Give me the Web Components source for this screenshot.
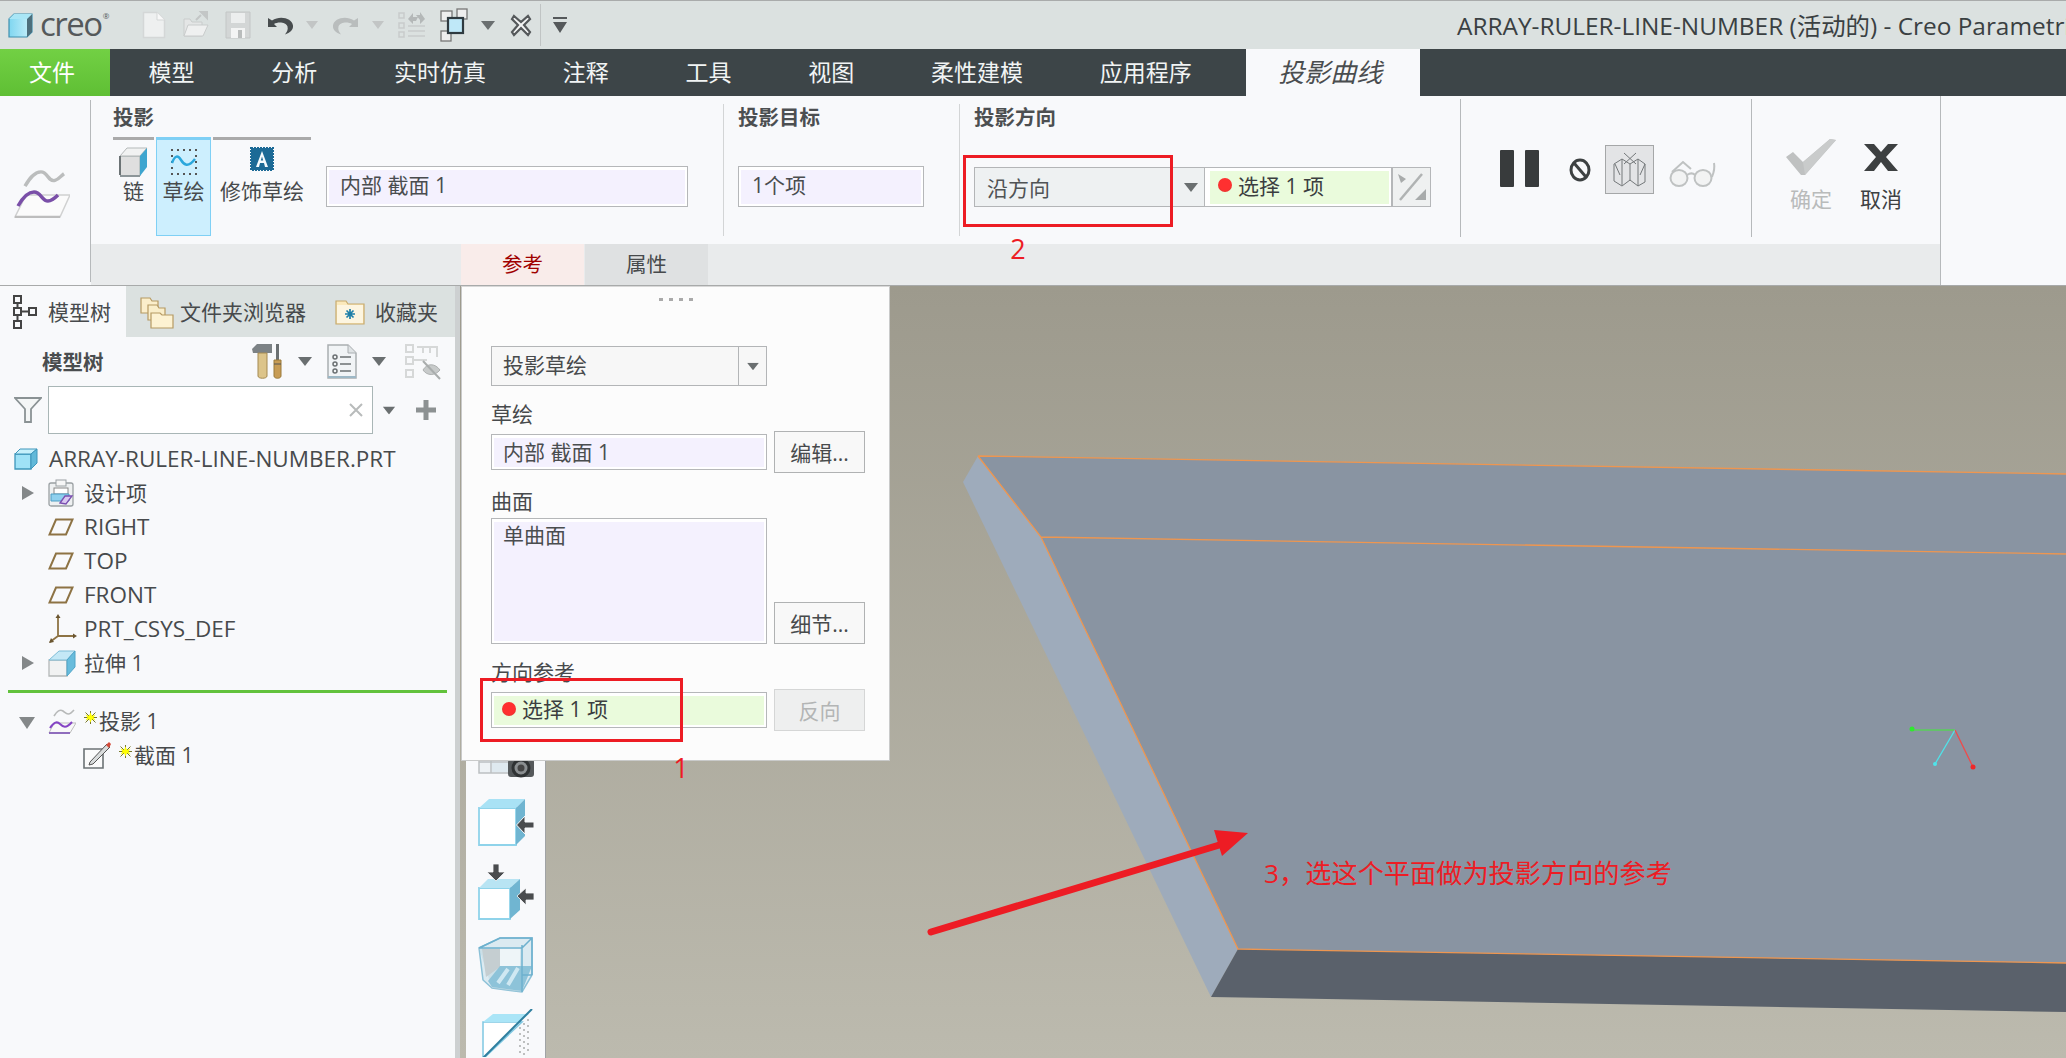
<!DOCTYPE html>
<html lang="zh">
<head>
<meta charset="utf-8">
<title>Creo Parametric</title>
<style>
  html, body { margin: 0; height: 100%; overflow: hidden; background: #f8f9fb; }
  body { font-family: "Open Sans", "Noto Sans CJK SC", sans-serif; font-size: 21px; color: #474a4c; }
</style>
</head>
<body>
<creo-app></creo-app>
<script>
const FONT = `"Open Sans", "Noto Sans CJK SC", sans-serif`;

// [width, height, svg body], drawn at 1:1 pixels
const icons = {
  logo: [25, 25, `<defs><linearGradient id="a" x1="0" x2="1"><stop offset="0" stop-color="#7fd6f0"/><stop offset="1" stop-color="#c9f1fb"/></linearGradient></defs>
    <path d="M1 6 6 1H24V19L19 24H1Z" fill="url(#a)" stroke="#3f8fae" stroke-width="1.2"/><path d="M19 5.500 24 1V19L19 24Z" fill="#4d6f7c"/><path d="M1 6 6 1H24L19 6Z" fill="#a9e6f6"/>`],
  newdoc: [24, 28, `<path d="M1.500 1.500H15L22.500 9V26.500H1.500Z" fill="#eef0f0" stroke="#d4d7d7" stroke-width="1.500"/><path d="M15 1.500V9H22.500" fill="#f8f8f8" stroke="#d4d7d7"/>`],
  open: [28, 28, `<path d="M3 25V8H9L11 11H21V25Z" fill="#e4e6e6" stroke="#c9cccc"/><path d="M3 25 7 14H27L22 25Z" fill="#eff0f0" stroke="#c9cccc"/><path d="M15 9 20 4M20 1 26 1 26 7Z" fill="#c3c6c6" stroke="#c3c6c6" stroke-width="2"/>`],
  save: [26, 28, `<path d="M1 1H25V27H1Z" fill="#d3d6d6" stroke="#c3c6c6"/><path d="M6 2H20V12H6Z" fill="#eceeee"/><path d="M6 17H20V27H6Z" fill="#f3f4f4"/><path d="M13 19H17V27H13Z" fill="#b9bcbc"/>`],
  undo: [28, 20, `<path d="M2 3V12H11L8 9C12 6.500 20 7 21.500 11.500 22.300 14.500 21 17 19 19.500 24 18 27.500 14.500 27 10.500 26 3.500 14.500 0 6 5.500Z" fill="#474c4e"/>`],
  redo: [28, 20, `<path d="M26 3V12H17L20 9C16 6.500 8 7 6.500 11.500 5.700 14.500 7 17 9 19.500 4 18 .5 14.500 1 10.500 2 3.500 13.500 0 22 5.500Z" fill="#b9bdbd"/>`],
  regen: [28, 28, `<g fill="none" stroke="#c9cbcb" stroke-width="1.500"><rect x="1" y="2" width="5" height="5"/><rect x="1" y="12" width="5" height="5"/><rect x="1" y="21" width="5" height="5"/><path d="M10 15H27M10 20H27M10 25H27"/></g><path d="M10 8 15 2 15 6 20 6 18 10 15 10V13ZM27 8 22 13V9L18 4 22 4V1Z" fill="#b4b8b8"/>`],
  windows: [28, 34, `<g fill="#eee" stroke="#777" stroke-width="1.300"><rect x="1" y="3" width="11" height="10"/><rect x="17" y="1" width="10" height="10"/><rect x="1" y="23" width="10" height="10"/></g><rect x="8" y="10" width="15" height="15" fill="#bfe8f8" stroke="#2f3a40" stroke-width="2.200"/>`],
  closex: [22, 24, `<path d="M4 3 11 9 18 3 20 6 14 12 20 19 18 22 11 15 4 22 2 19 8 12 2 6Z" fill="#f4f5f5" stroke="#55595b" stroke-width="2.200"/>`],
  drop: [14, 9, `<path d="M0 0H14L7 9Z" fill="#6a6f70"/>`],
  dropPale: [12, 8, `<path d="M0 0H12L6 8Z" fill="#c2c5c5"/>`],
  qat: [16, 18, `<path d="M1 1H15V3H1ZM1 6H15L8 17Z" fill="#55595b"/>`],

  project: [56, 50, `<path d="M11 18C15 11 20 3 27 3 34 3 34 14 41 12 45 11 47 7 50 5" transform="translate(0 1) scale(1 .95)" fill="none" stroke="#bbbdbd" stroke-width="3.500"/>
    <path d="M12 27H56L46 49H1Z" fill="#fbfbfb" stroke="#d0d1d1" stroke-width="1.500"/><path d="M1 49H46" stroke="#bdbdbd" stroke-width="2.500"/>
    <path d="M4 38C8 31 13 24 20 24 27 24 28 33 34 33 38 33 41 30 44 27" fill="none" stroke="#7a4fa8" stroke-width="3.500"/>`],
  chain: [30, 30, `<path d="M1 9H21V29H3L1 27Z" fill="#dfdfdf" stroke="#9aa" stroke-width="1"/><path d="M1 9 8 1H28L21 9Z" fill="#f1f2f2" stroke="#b5b9b9"/><path d="M21 9 28 1V20L21 29Z" fill="#3ea5cf"/><path d="M1 9V28" stroke="#6c7375" stroke-width="2"/><path d="M1 29H21" stroke="#8d9699" stroke-width="2"/>`],
  sketch: [28, 28, `<g fill="#555"><rect x="1" y="2" width="2" height="2"/><rect x="7" y="2" width="2" height="2"/><rect x="13" y="2" width="2" height="2"/><rect x="19" y="2" width="2" height="2"/><rect x="25" y="2" width="2" height="2"/><rect x="1" y="8" width="2" height="2"/><rect x="25" y="8" width="2" height="2"/><rect x="1" y="14" width="2" height="2"/><rect x="25" y="14" width="2" height="2"/><rect x="1" y="20" width="2" height="2"/><rect x="25" y="20" width="2" height="2"/><rect x="1" y="26" width="2" height="2"/><rect x="7" y="26" width="2" height="2"/><rect x="13" y="26" width="2" height="2"/><rect x="19" y="26" width="2" height="2"/><rect x="25" y="26" width="2" height="2"/></g><path d="M2 16C5 8 8 8 11 13S18 21 25 12" fill="none" stroke="#2ba7dc" stroke-width="2.500"/>`],
  cosmetic: [24, 24, `<rect x="1" y="1" width="22" height="22" fill="#1c6a96" stroke="#1c6a96" stroke-dasharray="2 1" stroke-width="2"/><path d="M12 4 18 20H15L14 16H10L9 20H6ZM10.800 13.500H13.200L12 9.500Z" fill="#f5fbfe"/>`],
  flip: [30, 30, `<rect x="0" y="0" width="30" height="30" fill="#eff1f1"/><path d="M25 2 3 28" stroke="#b0b3b3" stroke-width="2.500"/><path d="M1 2 9 7 4 11ZM29 28H18L29 17Z" fill="#a8abab"/>`],
  pause: [41, 39, `<rect x="1" y="1" width="14" height="37" rx="1" fill="#383b3c"/><rect x="26" y="1" width="14" height="37" rx="1" fill="#383b3c"/>`],
  noentry: [22, 24, `<ellipse cx="11" cy="12" rx="9" ry="10" fill="none" stroke="#3d4142" stroke-width="3"/><path d="M5 5 17 19" stroke="#3d4142" stroke-width="3"/>`],
  wire: [36, 38, `<g fill="none" stroke="#74787a" stroke-width="1"><path d="M2 13 10 8 18 13 26 8 33 13V31L26 35 18 29 10 35 2 30Z"/><path d="M10 8V34M18 13V30M26 8V35"/><path d="M12 2 24 13M24 2 12 13M3 13 8 24M33 13 28 24"/></g>`],
  glasses: [48, 28, `<g fill="#f2f3f3" stroke="#bfc2c2" stroke-width="2"><ellipse cx="10" cy="18" rx="8.500" ry="8"/><ellipse cx="34" cy="18" rx="8.500" ry="8"/></g><path d="M18 15C21 13 24 13 26 15M3 12 14 2 22 9M43 17C45 12 46 8 45 3" fill="none" stroke="#bfc2c2" stroke-width="2"/>`],
  check: [52, 38, `<path d="M1 19 8 14 18 24 45 1 51 2 20 37H16Z" fill="#bfc1c1"/><path d="M18 24 45 1 51 2 20 37Z" fill="#c9cbcb"/>`],
  cross: [36, 29, `<path d="M1 1H11L18 9 25 1H35L23 14 35 28H25L18 19 11 28H1L13 14Z" fill="#3d4041"/>`],

  treeTab: [24, 34, `<g fill="none" stroke="#444" stroke-width="2"><rect x="1" y="1" width="7" height="7"/><rect x="1" y="13" width="7" height="7"/><rect x="16" y="13" width="7" height="7"/><rect x="1" y="26" width="7" height="7"/><path d="M4.500 8V13M4.500 20V26M8 16.500H16"/></g>`],
  folders: [34, 34, `<g stroke="#b69a63" stroke-width="1.200"><path d="M1 3H10L12 6H18V18H1Z" fill="#fbeecb"/><path d="M8 10H17L19 13H25V25H8Z" fill="#faeeca"/><path d="M11 18H20L22 20H33V33H11Z" fill="#fdf2d2"/></g>`],
  favorite: [30, 27, `<path d="M1 3H11L13 6H29V26H1Z" fill="#fbe9bb" stroke="#c7aa6d" stroke-width="1.200"/><rect x="2" y="7" width="26" height="18" fill="#fdf5e0"/><g stroke="#1f7fa8" stroke-width="1.700"><path d="M15 11V21M10 16H20M11.500 12.500 18.500 19.500M18.500 12.500 11.500 19.500"/></g>`],
  tools: [30, 35, `<path d="M0 5 5 0H20V9H1Z" fill="#7c8285"/><path d="M6 9H15V32C15 35 6 35 6 32Z" fill="#dcc48a" stroke="#a48950"/><path d="M24 0H27V16H24Z" fill="#6b7072"/><path d="M22 16H29V32C29 35 22 35 22 32Z" fill="#c79c55" stroke="#9a7a3a"/><path d="M22 20H29" stroke="#555"/>`],
  listDoc: [30, 35, `<path d="M1 1H21L29 9V34H1Z" fill="#f1f4f6" stroke="#a9aeb1" stroke-width="1.500"/><path d="M21 1V9H29" fill="#dfe3e5" stroke="#a9aeb1"/><g stroke="#6b7073" stroke-width="1.500" fill="none"><circle cx="8" cy="13" r="2"/><circle cx="8" cy="20" r="2"/><circle cx="8" cy="27" r="2"/><path d="M13 13H24M13 20H24M13 27H24"/></g><path d="M1 33H29" stroke="#9db8c6" stroke-width="2"/>`],
  hideTree: [36, 36, `<g fill="none" stroke="#d6d8d8" stroke-width="2"><rect x="1" y="1" width="7" height="7"/><rect x="1" y="13" width="7" height="7"/><rect x="1" y="26" width="7" height="7"/><path d="M12 3H32V8M12 16H22"/><path d="M18 3V9M25 3V9M32 3V13M8 16H12"/></g><path d="M18 26C22 19 30 19 35 26 30 32 22 32 18 26Z" fill="#c7caca" stroke="#aeb1b1"/><path d="M18 17 35 35" stroke="#a9adad" stroke-width="2"/>`],
  funnel: [28, 26, `<path d="M1 1H27L17 12V25H11V12Z" fill="#f4f6f6" stroke="#8a9294" stroke-width="1.800"/>`],
  clear: [14, 14, `<path d="M1 1 13 13M13 1 1 13" stroke="#b8bbbb" stroke-width="2"/>`],
  plus: [20, 20, `<path d="M7.500 0H12.500V7.500H20V12.500H12.500V20H7.500V12.500H0V7.500H7.500Z" fill="#8c9192"/>`],

  part: [24, 22, `<path d="M1 6H17V21H1Z" fill="#9fe2f7" stroke="#3e96bb" stroke-width="1.300"/><path d="M1 6 6 1H23L17 6Z" fill="#c6f0fb" stroke="#3e96bb" stroke-width="1"/><path d="M17 6 23 1V15L17 21Z" fill="#62b9d9" stroke="#3e96bb" stroke-width="1"/>`],
  design: [26, 28, `<rect x="1" y="4" width="24" height="23" rx="2" fill="#eef0f1" stroke="#9aa0a3" stroke-width="1.300"/><rect x="8" y="1" width="10" height="6" fill="#f6f6f6" stroke="#9aa0a3"/><rect x="6" y="9" width="14" height="6" fill="#fff" stroke="#888"/><path d="M3 15H21V22H3Z" fill="#8fd0ee" stroke="#4d9dc4"/><path d="M12 24 17 17H24L18 25Z" fill="#d9c8f0" stroke="#7a4fb0" stroke-width="1.300"/>`],
  plane: [26, 18, `<path d="M8 1.500H24.500L18 16.500H1.500Z" fill="none" stroke="#8d7344" stroke-width="2"/>`],
  csys: [29, 30, `<path d="M10 2V22M10 22H27M10 22 2 28" fill="none" stroke="#8d7344" stroke-width="1.800"/><path d="M10 0 12.500 4H7.500ZM29 22 25 19.500V24.500ZM1 29 3 24 6 28Z" fill="#6a5530"/>`],
  extrude: [28, 28, `<path d="M1 11H19V27H1Z" fill="#f1f2f2" stroke="#b4b8b8" stroke-width="1.300"/><path d="M1 11 11 2H27L19 11Z" fill="#c4e8f6" stroke="#7fbdd7"/><path d="M19 11 27 2V18L19 27Z" fill="#68bcdc" stroke="#4fa5c8"/>`],
  projSmall: [28, 26, `<path d="M6 8C9 3 12 1 15 3S20 9 26 2" fill="none" stroke="#b7b9b9" stroke-width="1.600"/><path d="M6 15H28L22 25H1Z" fill="#f8f8f8" stroke="#bdbdbd"/><path d="M1 25H22" stroke="#8f6dbd" stroke-width="2"/><path d="M2 20C6 14 9 13 12 16S18 21 24 14" fill="none" stroke="#8444c4" stroke-width="2"/>`],
  section: [28, 28, `<path d="M1 8H20V27H1Z" fill="#fbfbfb" stroke="#6c7375" stroke-width="1.600"/><path d="M7 21 24 3 27 6 10 23 6 24Z" fill="#d9dcdc" stroke="#555" stroke-width="1"/><path d="M23 4 26 1 28 3 26 7Z" fill="#d34a3a"/>`],
  star: [13, 13, `<g stroke="#77772a" stroke-width="1"><path d="M6.500 0V13M0 6.500H13M1.500 1.500 11.500 11.500M11.500 1.500 1.500 11.500"/></g><path d="M6.500 1.500 8 5 11.500 3.500 9.500 6.500 11.500 9.500 8 8 6.500 11.500 5 8 1.500 9.500 3.500 6.500 1.500 3.500 5 5Z" fill="#ffff00"/>`],

  shotTool: [56, 37, `<g fill="#eef2f5" stroke="#bcc0c2" stroke-width="1.500"><path d="M1 0H31V32H1Z"/><path d="M1 21H31M13 0V32"/></g><path d="M14 22H31V31H14Z" fill="#dfe9ef"/><rect x="30" y="18" width="26" height="18" rx="3" fill="#55595b"/><circle cx="43" cy="27" r="8" fill="#8a8e90" stroke="#2f3233" stroke-width="3"/><circle cx="43" cy="27" r="3.500" fill="#444"/>`],
  cubeArrow: [56, 48, `<path d="M1 10H38V47H1Z" fill="#fff" stroke="#8fd3ea" stroke-width="1.800"/><path d="M1 10 11 1H47L38 10Z" fill="#a9e2f5"/><path d="M38 10 47 1V38L38 47Z" fill="#70b5d1"/><path d="M38.500 27 47 18V24H56V30H47V36Z" fill="#4a4c4e" stroke="#f8f9fb" stroke-width="1"/>`],
  cubeArrows: [56, 56, `<path d="M1 24H32V55H1Z" fill="#fff" stroke="#8fd3ea" stroke-width="1.800"/><path d="M1 24 10 15H42L32 24Z" fill="#b8e4f3"/><path d="M32 24 42 15V46L32 55Z" fill="#70b5d1"/><path d="M18 17 9 8H15V0H21V8H27ZM39 32 48 24V29H56V36H48V41Z" fill="#4a4c4e" stroke="#f8f9fb" stroke-width=".8"/>`],
  shellBox: [55, 56, `<path d="M1 11 22 1H54V38L44 55 14 51 5 43Z" fill="#dbeaf1" stroke="#8cc1d7" stroke-width="1.500"/><path d="M1 11H42L44 55 14 51Z" fill="#bcd6e0" fill-opacity=".5"/><path d="M22 10H42V29H22Z" fill="#eef5f8"/><path d="M4 12 22 12 22 30 8 40Z" fill="#c5ced1"/><path d="M10 44 22 29H54L44 54 14 50Z" fill="#8dc3d9"/><path d="M20 46 30 32M30 48 40 31" stroke="#cfe8f2" stroke-width="4"/><path d="M1 11 22 1H54V38M44 8V55M1 11H44L54 1M44 38H54" fill="none" stroke="#6db1ce" stroke-width="1.500"/>`],
  clipCube: [52, 48, `<path d="M1 13H40L1 50Z" fill="#fff" stroke="#7fc8e2" stroke-width="1.500"/><path d="M1 13 11 5H47L37 13Z" fill="#aae5f7"/><g fill="#bdbfbf"><rect x="37" y="18" width="2" height="2"/><rect x="41" y="14" width="2" height="2"/><rect x="45" y="10" width="2" height="2"/><rect x="41" y="20" width="2" height="2"/><rect x="45" y="16" width="2" height="2"/><rect x="37" y="24" width="2" height="2"/><rect x="41" y="26" width="2" height="2"/><rect x="45" y="22" width="2" height="2"/><rect x="37" y="30" width="2" height="2"/><rect x="41" y="32" width="2" height="2"/><rect x="45" y="28" width="2" height="2"/><rect x="37" y="36" width="2" height="2"/><rect x="41" y="38" width="2" height="2"/><rect x="45" y="34" width="2" height="2"/><rect x="37" y="42" width="2" height="2"/><rect x="41" y="44" width="2" height="2"/><rect x="45" y="40" width="2" height="2"/></g><path d="M50 0 0 50" stroke="#2f7f9f" stroke-width="2"/>`]
};

class CreoIcon extends HTMLElement {
  connectedCallback() {
    if (this.shadowRoot) return;
    const [w, h, body] = icons[this.getAttribute('name')];
    this.attachShadow({ mode: 'open' }).innerHTML = `
      <style>:host{display:block;flex:none;width:${w}px;height:${h}px;line-height:0}</style>
      <svg xmlns="http://www.w3.org/2000/svg" width="${w}" height="${h}" viewBox="0 0 ${w} ${h}">${body}</svg>`;
  }
}

class CreoField extends HTMLElement {
  constructor() {
    super();
    this.attachShadow({ mode: 'open' }).innerHTML = `
      <style>
        :host{display:block;box-sizing:border-box;border:1px solid #b5b7b9;background:#fff;padding:3px 2px 2px 2px;flex:none}
        .in{height:100%;box-sizing:border-box;background:#f4f1fe;display:flex;align-items:flex-start;padding-left:var(--pad,11px);white-space:nowrap;line-height:var(--lh,30px);color:#4a4d4f}
        :host([kind=green]) .in{background:#eafbdc;color:#3b3e40;padding-left:8px}
        .dot{display:none;width:14px;height:14px;border-radius:50%;background:radial-gradient(circle at 50% 45%,#ff3030 55%,#c23c30);margin:calc((var(--lh,30px) - 14px)/2 - 1px) 6px 0 0;flex:none}
        :host([kind=green]) .dot{display:block}
      </style>
      <div class="in"><span class="dot"></span><span><slot></slot></span></div>`;
  }
}

class CreoButton extends HTMLElement {
  constructor() {
    super();
    this.attachShadow({ mode: 'open' }).innerHTML = `
      <style>
        :host{display:flex;align-items:center;justify-content:center;box-sizing:border-box;width:91px;height:42px;flex:none;margin-left:7px;border:1px solid #b0b2b3;background:#f8f8f8;color:#474a4c}
        :host([disabled]){background:#eeefef;border-color:#d5d6d6;color:#b3b5b5}
      </style><slot></slot>`;
  }
}

class CreoTitlebar extends HTMLElement {
  constructor() {
    super();
    this.attachShadow({ mode: 'open' }).innerHTML = `
      <style>
        :host{display:flex;align-items:center;height:49px;box-sizing:border-box;border-top:1px solid #a9abab;background:#dbe1e0;overflow:hidden;white-space:nowrap}
        .logo{font:400 33px/1 "Open Sans",sans-serif;color:#55595b;letter-spacing:-1.500px;margin:-3px 0 0 7px;width:76px;flex:none}
        .logo sup{font-size:8px;vertical-align:17px;margin-left:1px;letter-spacing:0}
        .sep{width:1px;height:42px;background:#c0c4c4;margin-left:8px;flex:none}
        .title{margin-left:889px;font-size:24.400px;color:#3a4042;flex:none;position:relative;top:-1px}
      </style>
      <creo-icon name="logo" style="margin-left:8px"></creo-icon>
      <span class="logo">creo<sup>®</sup></span>
      <creo-icon name="newdoc" style="margin-left:26px"></creo-icon>
      <creo-icon name="open" style="margin-left:15px"></creo-icon>
      <creo-icon name="save" style="margin-left:16px"></creo-icon>
      <creo-icon name="undo" style="margin-left:15px"></creo-icon>
      <creo-icon name="dropPale" style="margin-left:12px"></creo-icon>
      <creo-icon name="redo" style="margin-left:14px"></creo-icon>
      <creo-icon name="dropPale" style="margin-left:12px"></creo-icon>
      <creo-icon name="regen" style="margin-left:14px"></creo-icon>
      <creo-icon name="windows" style="margin-left:14px"></creo-icon>
      <creo-icon name="drop" style="margin-left:13px"></creo-icon>
      <creo-icon name="closex" style="margin-left:15px"></creo-icon>
      <span class="sep"></span>
      <creo-icon name="qat" style="margin-left:11px"></creo-icon>
      <span class="title">ARRAY-RULER-LINE-NUMBER (活动的) - Creo Parametric</span>`;
  }
}

class CreoTabs extends HTMLElement {
  constructor() {
    super();
    const tabs = ['模型', '分析', '实时仿真', '注释', '工具', '视图', '柔性建模', '应用程序'];
    this.attachShadow({ mode: 'open' }).innerHTML = `
      <style>
        :host{display:flex;height:47px;background:#3d4548;color:#f1f4f4;font-size:23px;line-height:47px;white-space:nowrap}
        .file{width:110px;box-sizing:border-box;padding-right:6px;text-align:center;background:linear-gradient(#72d044,#5fbf34);color:#fff}
        .t{padding:0 38.400px}
        .active{width:174px;box-sizing:border-box;padding-left:32px;margin-left:16px;background:#f8f9fb;color:#4a4d4f;font-style:italic;font-size:26px}
      </style>
      <div class="file">文件</div>
      ${tabs.map(t => `<div class="t">${t}</div>`).join('')}
      <div class="active">投影曲线</div>`;
  }
}

class CreoRibbon extends HTMLElement {
  constructor() {
    super();
    this.attachShadow({ mode: 'open' }).innerHTML = `
      <style>
        :host{display:flex;height:190px;box-sizing:border-box;border-bottom:1px solid #a8aaaa;background:#f8f9fb;white-space:nowrap}
        .side{width:91px;margin-top:4px;height:182px;border-right:1px solid #b6b9bb;display:flex;justify-content:center;padding-top:68px;box-sizing:border-box;flex:none}
        .side creo-icon{margin-left:-6px}
        .mid{width:1850px;border-right:1px solid #b6b9bb;flex:none;display:flex;flex-direction:column;height:189px;box-sizing:border-box}
        .secs{display:flex;height:148px}
        .sec{box-sizing:border-box;margin-top:8px;height:132px;padding-left:14px;border-right:1px solid #d3d5d6;flex:none}
        .sec.strong{margin-top:3px;height:138px;border-right-color:#b6b9bb}
        h3{margin:0;font:700 20.500px/30px ${FONT};color:#4c4f51;height:30px;margin-top:-2px}
        .btns{display:flex;margin-top:5px}
        .b{border-top:3px solid #aaa;height:99px;box-sizing:border-box;display:flex;flex-direction:column;align-items:center;margin-right:2px;flex:none;padding-top:7px}
        .b creo-icon{height:30px}
        .b span{line-height:30px;margin-top:-1px}
        .b.on{background:#cdeffe;border:1px solid #7fd0f5;border-top:3px solid #7fd0f5;padding-top:7px}
        .row{display:flex}
        .combo{width:230px;height:40px;box-sizing:border-box;border:1px solid #b3b5b7;border-right:0;background:#eef1f2;display:flex;align-items:center;padding-left:12px;color:#505355}
        .combo creo-icon{margin-left:auto;margin-right:6px}
        .flip{width:39px;height:40px;box-sizing:border-box;border:1px solid #b5b7b9;background:#eff1f1;display:flex;align-items:center;justify-content:center}
        .tools{display:flex;align-items:flex-start}
        .sel{width:49px;height:49px;box-sizing:border-box;border:1px solid #a5a7a8;background:#e3e4e6;display:flex;align-items:center;justify-content:center}
        .act{display:flex;flex-direction:column;align-items:center;width:70px;font-size:21px;line-height:28px}
        .strip{display:flex;height:41px;background:#e9ebec;padding-left:370px;font-size:20.500px;line-height:41px}
        .strip div{width:123px;text-align:center;margin-right:1px}
        .ref{background:#f9ecea;color:#a00000}
        .attr{background:#dfe1e2}
      </style>
      <div class="side"><creo-icon name="project"></creo-icon></div>
      <div class="mid">
        <div class="secs">
          <div class="sec" style="width:633px;padding-left:22px">
            <h3>投影</h3>
            <div class="row">
              <div class="btns">
                <div class="b" style="width:41px"><creo-icon name="chain"></creo-icon><span>链</span></div>
                <div class="b on" style="width:55px"><creo-icon name="sketch"></creo-icon><span>草绘</span></div>
                <div class="b" style="width:98px;margin-right:0"><creo-icon name="cosmetic"></creo-icon><span>修饰草绘</span></div>
              </div>
              <creo-field style="width:362px;height:41px;margin:34px 0 0 15px">内部 截面 1</creo-field>
            </div>
          </div>
          <div class="sec" style="width:236px">
            <h3>投影目标</h3>
            <creo-field style="width:186px;height:41px;margin-top:34px">1个项</creo-field>
          </div>
          <div class="sec strong" style="width:501px">
            <h3 style="margin-top:3px">投影方向</h3>
            <div class="row" style="margin-top:35px">
              <div class="combo">沿方向<creo-icon name="drop"></creo-icon></div>
              <creo-field kind="green" style="width:188px;height:40px;padding-left:5px">选择 1 项</creo-field>
              <div class="flip"><creo-icon name="flip"></creo-icon></div>
            </div>
          </div>
          <div class="sec strong tools" style="width:291px;padding-left:38px">
            <creo-icon name="pause" style="margin-top:50px"></creo-icon>
            <creo-icon name="noentry" style="margin:59px 0 0 29px"></creo-icon>
            <div class="sel" style="margin:46px 0 0 14px"><creo-icon name="wire"></creo-icon></div>
            <creo-icon name="glasses" style="margin:61px 0 0 15px"></creo-icon>
          </div>
          <div class="sec" style="width:188px;padding-left:24px;border:0;display:flex;margin-top:0;height:148px">
            <div class="act" style="padding-top:42px;color:#b9bbbb"><creo-icon name="check"></creo-icon><span style="margin-top:9px">确定</span></div>
            <div class="act" style="padding-top:47px;color:#3d4042"><creo-icon name="cross"></creo-icon><span style="margin-top:13px">取消</span></div>
          </div>
        </div>
        <div class="strip"><div class="ref">参考</div><div class="attr">属性</div></div>
      </div>`;
  }
}

class CreoTreeRow extends HTMLElement {
  constructor() {
    super();
    this.attachShadow({ mode: 'open' }).innerHTML = `
      <style>
        :host{display:flex;align-items:center;height:34px;white-space:nowrap;padding-left:var(--x,48px);position:relative;color:#474a4c}
        .tw{position:absolute;left:22px;top:10px;width:0;height:0;border-left:12px solid #848889;border-top:7px solid transparent;border-bottom:7px solid transparent}
        :host([open]) .tw{left:19px;top:13px;border-left:8px solid transparent;border-right:8px solid transparent;border-top:12px solid #848889;border-bottom:0}
        :host(:not([twist])) .tw{display:none}
        slot[name=icon]{display:flex;width:var(--icon,36px);flex:none}
        .txt{position:relative;top:-1px}
        :host([latin]) .txt{font-size:22.500px}
      </style>
      <span class="tw"></span><slot name="icon"></slot><span class="txt"><slot></slot></span>`;
  }
}

class CreoTree extends HTMLElement {
  constructor() {
    super();
    this.attachShadow({ mode: 'open' }).innerHTML = `
      <style>
        :host{display:block;width:455px;flex:none;background:#f8f9fb;height:772px;overflow:hidden;white-space:nowrap;font-size:21px}
        .tabs{display:flex;height:51px;background:#dbe1e0;align-items:center}
        .tab{display:flex;align-items:center;height:51px}
        .tab span{position:relative;top:-1px}
        .tab.on{width:126px;background:#f8f9fb;padding-left:13px;box-sizing:border-box}
        .head{display:flex;align-items:center;height:49px}
        .head b{font:700 20.500px ${FONT};margin-left:42px;width:210px;color:#4a4d4f;position:relative;top:-1px}
        .filter{display:flex;align-items:center;height:48px}
        .input{box-sizing:border-box;width:325px;height:48px;margin-left:6px;border:1px solid #a9b6b6;background:#fff;display:flex;align-items:center;justify-content:flex-end;padding-right:9px}
        .list{padding-top:8px}
        hr{height:3px;border:0;background:#62c23c;margin:10px 8px 11px 8px}
      </style>
      <div class="tabs">
        <div class="tab on"><creo-icon name="treeTab"></creo-icon><span style="margin-left:11px">模型树</span></div>
        <div class="tab" style="margin-left:14px"><creo-icon name="folders"></creo-icon><span style="margin-left:6px">文件夹浏览器</span></div>
        <div class="tab" style="margin-left:29px"><creo-icon name="favorite"></creo-icon><span style="margin-left:10px">收藏夹</span></div>
      </div>
      <div class="head">
        <b>模型树</b>
        <creo-icon name="tools"></creo-icon><creo-icon name="drop" style="margin-left:16px"></creo-icon>
        <creo-icon name="listDoc" style="margin-left:15px"></creo-icon><creo-icon name="drop" style="margin-left:15px"></creo-icon>
        <creo-icon name="hideTree" style="margin-left:19px"></creo-icon>
      </div>
      <div class="filter">
        <creo-icon name="funnel" style="margin-left:14px"></creo-icon>
        <div class="input"><creo-icon name="clear"></creo-icon></div>
        <creo-icon name="drop" style="margin-left:9px;transform:scale(.9)"></creo-icon>
        <creo-icon name="plus" style="margin-left:20px"></creo-icon>
      </div>
      <div class="list">
        <creo-tree-row latin style="--x:14px;--icon:35px"><creo-icon slot="icon" name="part"></creo-icon>ARRAY-RULER-LINE-NUMBER.PRT</creo-tree-row>
        <creo-tree-row twist><creo-icon slot="icon" name="design"></creo-icon>设计项</creo-tree-row>
        <creo-tree-row latin><creo-icon slot="icon" name="plane"></creo-icon>RIGHT</creo-tree-row>
        <creo-tree-row latin><creo-icon slot="icon" name="plane"></creo-icon>TOP</creo-tree-row>
        <creo-tree-row latin><creo-icon slot="icon" name="plane"></creo-icon>FRONT</creo-tree-row>
        <creo-tree-row latin><creo-icon slot="icon" name="csys"></creo-icon>PRT_CSYS_DEF</creo-tree-row>
        <creo-tree-row twist><creo-icon slot="icon" name="extrude"></creo-icon>拉伸 1</creo-tree-row>
        <hr>
        <creo-tree-row twist open><creo-icon slot="icon" name="projSmall"></creo-icon><creo-icon name="star" style="display:inline-block;margin:-11px 2px 0 0;vertical-align:middle"></creo-icon>投影 1</creo-tree-row>
        <creo-tree-row style="--x:83px"><creo-icon slot="icon" name="section"></creo-icon><creo-icon name="star" style="display:inline-block;margin:-11px 2px 0 0;vertical-align:middle"></creo-icon>截面 1</creo-tree-row>
      </div>`;
  }
}

class CreoPopup extends HTMLElement {
  constructor() {
    super();
    this.attachShadow({ mode: 'open' }).innerHTML = `
      <style>
        :host{position:absolute;left:1px;top:0;width:429px;height:475px;box-sizing:border-box;border:1px solid #c9caca;border-top-color:#d8d8d8;background:#fcfcfc;padding-left:29px;white-space:nowrap;color:#474a4c;display:block;--pad:9px}
        .grip{display:flex;gap:6px;justify-content:center;margin:11px 0 0 -29px;height:48px}
        .grip i{width:4px;height:3px;background:#aaa}
        .combo{width:276px;height:40px;box-sizing:border-box;border:1px solid #b3b5b7;background:#f7f7f7;display:flex;align-items:center;padding-left:11px;line-height:36px}
        .combo .arr{margin-left:auto;width:27px;height:100%;border-left:1px solid #b3b5b7;display:flex;align-items:center;justify-content:center}
        label{display:block;height:28px;line-height:28px}
        .row{display:flex}
      </style>
      <div class="grip"><i></i><i></i><i></i><i></i></div>
      <div class="combo"><span style="position:relative;top:-1px">投影草绘</span><span class="arr"><creo-icon name="drop" style="transform:scale(.85)"></creo-icon></span></div>
      <label style="margin:14px 0 3px">草绘</label>
      <div class="row" style="align-items:center">
        <creo-field style="width:276px;height:36px;--lh:28px">内部 截面 1</creo-field><creo-button>编辑...</creo-button>
      </div>
      <label style="margin:14px 0 3px">曲面</label>
      <div class="row" style="align-items:flex-end">
        <creo-field style="width:276px;height:126px;--lh:27px">单曲面</creo-field><creo-button>细节...</creo-button>
      </div>
      <label style="margin:14px 0 3px">方向参考</label>
      <div class="row" style="align-items:center">
        <creo-field kind="green" style="width:276px;height:36px;--lh:27px">选择 1 项</creo-field><creo-button disabled>反向</creo-button>
      </div>`;
  }
}

class CreoViewport extends HTMLElement {
  constructor() {
    super();
    this.attachShadow({ mode: 'open' }).innerHTML = `
      <style>
        :host{display:block;position:relative;flex:1;height:772px;overflow:hidden;background:linear-gradient(#9d9a8d,#bcbaae)}
        svg{position:absolute;left:0;top:0}
        .bar{position:absolute;left:6px;top:0;bottom:0;width:80px;box-sizing:border-box;background:#f8f9fb;border-right:1px solid #a0a3a5;display:flex;flex-direction:column;padding:455px 0 0 12px;overflow:hidden}
      </style>
      <svg width="1606" height="772" viewBox="460 286 1606 772">
        <polygon points="978,456 2066,474 2066,963 1238,949 1041,537" fill="#8994a2"/>
        <polygon points="978,456 963,482 1211,997 1238,949 1041,537" fill="#9eabbb"/>
        <polygon points="1238,949 2066,963 2066,1012 1211,997" fill="#5a616b"/>
        <g stroke="#ee9650" stroke-width="1.300" fill="none">
          <path d="M978 456 2066 474M978 456 1041 537 1238 949 2066 963M1041 537 2066 554"/>
        </g>
        <path d="M1955 730H1912" stroke="#58d058" stroke-width="1.500"/><circle cx="1912" cy="729" r="2.500" fill="#2eea2e"/>
        <path d="M1955 730 1935 764" stroke="#4fe4ea" stroke-width="1.300"/><circle cx="1935" cy="764" r="2" fill="#4fe4ea"/>
        <path d="M1955 730 1973 767" stroke="#f04a4a" stroke-width="1.300"/><circle cx="1973" cy="767" r="2.500" fill="#f02828"/>
      </svg>
      <div class="bar">
        <creo-icon name="shotTool"></creo-icon>
        <creo-icon name="cubeArrow" style="margin-top:20px"></creo-icon>
        <creo-icon name="cubeArrows" style="margin-top:18px"></creo-icon>
        <creo-icon name="shellBox" style="margin-top:17px"></creo-icon>
        <creo-icon name="clipCube" style="margin:16px 0 0 4px"></creo-icon>
      </div>
      <creo-popup></creo-popup>`;
  }
}

// red annotations pasted on top of the screenshot
class CreoCallouts extends HTMLElement {
  constructor() {
    super();
    this.attachShadow({ mode: 'open' }).innerHTML = `
      <style>
        :host{position:absolute;left:0;top:0;width:2066px;height:1058px;pointer-events:none;color:#ed1c24;font-family:${FONT}}
        .box{position:absolute;box-sizing:border-box;border:3px solid #ed1c24}
        span{position:absolute;line-height:1;white-space:nowrap;transform:translate(-50%,-50%)}
        svg{position:absolute;left:0;top:0}
      </style>
      <div class="box" style="left:963px;top:155px;width:210px;height:72px"></div>
      <div class="box" style="left:480px;top:678px;width:203px;height:64px"></div>
      <span style="left:1018px;top:248px;font-size:27px">2</span>
      <span style="left:681px;top:767px;font-size:27px">1</span>
      <span style="left:1468px;top:873px;font-size:26.200px">3，选这个平面做为投影方向的参考</span>
      <svg width="2066" height="1058">
        <path d="M931 932 1226 843" stroke="#ed1c24" stroke-width="7" stroke-linecap="round"/>
        <polygon points="1248,833 1214,830 1222,856" fill="#ed1c24"/>
      </svg>`;
  }
}

class CreoApp extends HTMLElement {
  constructor() {
    super();
    this.attachShadow({ mode: 'open' }).innerHTML = `
      <style>
        :host{display:block;position:relative;width:2066px;height:1058px;overflow:hidden}
        main{display:flex;height:772px}
        .div{width:5px;background:#cdd0d1;flex:none}
      </style>
      <creo-titlebar></creo-titlebar>
      <creo-tabs></creo-tabs>
      <creo-ribbon></creo-ribbon>
      <main><creo-tree></creo-tree><div class="div"></div><creo-viewport></creo-viewport></main>
      <creo-callouts></creo-callouts>`;
  }
}

customElements.define('creo-icon', CreoIcon);
customElements.define('creo-field', CreoField);
customElements.define('creo-button', CreoButton);
customElements.define('creo-titlebar', CreoTitlebar);
customElements.define('creo-tabs', CreoTabs);
customElements.define('creo-ribbon', CreoRibbon);
customElements.define('creo-tree-row', CreoTreeRow);
customElements.define('creo-tree', CreoTree);
customElements.define('creo-popup', CreoPopup);
customElements.define('creo-viewport', CreoViewport);
customElements.define('creo-callouts', CreoCallouts);
customElements.define('creo-app', CreoApp);
</script>
</body>
</html>
